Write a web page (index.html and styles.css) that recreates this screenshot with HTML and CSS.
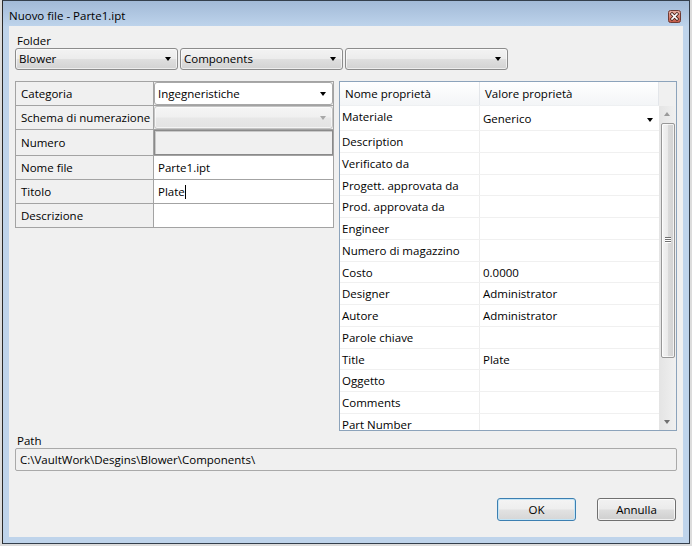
FILE: index.html
```html
<!DOCTYPE html>
<html>
<head>
<meta charset="utf-8">
<link rel="stylesheet" href="styles.css">
</head>
<body>
<div class="window">
  <div class="titlebar">
    <span class="title">Nuovo file - Parte1.ipt</span>
    <span class="close">
      <svg width="13" height="13" viewBox="0 0 13 13">
        <defs>
          <linearGradient id="cg" x1="0" y1="0" x2="0" y2="1">
            <stop offset="0" stop-color="#eab3a6"/>
            <stop offset="0.5" stop-color="#d98473"/>
            <stop offset="1" stop-color="#c25845"/>
          </linearGradient>
        </defs>
        <rect x="0.5" y="0.5" width="12" height="12" rx="2" fill="url(#cg)" stroke="#6e3a33"/>
        <path d="M4 4 L9 9 M9 4 L4 9" stroke="#4a231d" stroke-width="3.2" stroke-linecap="square"/>
        <path d="M4 4 L9 9 M9 4 L4 9" stroke="#ffffff" stroke-width="1.6" stroke-linecap="square"/>
      </svg>
    </span>
  </div>
  <div class="client">
    <div class="lbl folder-lbl">Folder</div>
    <div class="combos">
      <div class="combo">Blower<span class="arrow"></span></div>
      <div class="combo">Components<span class="arrow"></span></div>
      <div class="combo"><span class="arrow"></span></div>
    </div>
    <div class="main">
      <div class="fields">
        <div class="frow">
          <div class="fl">Categoria</div>
          <div class="fv nopad"><div class="combo white">Ingegneristiche<span class="arrow"></span></div></div>
        </div>
        <div class="frow">
          <div class="fl">Schema di numerazione</div>
          <div class="fv nopad"><div class="combo disabled"><span class="arrow light"></span></div></div>
        </div>
        <div class="frow tall">
          <div class="fl">Numero</div>
          <div class="fv nopad"><div class="textbox-dis"></div></div>
        </div>
        <div class="frow">
          <div class="fl">Nome file</div>
          <div class="fv">Parte1.ipt</div>
        </div>
        <div class="frow">
          <div class="fl">Titolo</div>
          <div class="fv">Plate<span class="caret"></span></div>
        </div>
        <div class="frow">
          <div class="fl">Descrizione</div>
          <div class="fv"></div>
        </div>
      </div>
      <div class="props">
        <div class="pmain">
          <div class="phead">
            <div class="pn">Nome proprietà</div>
            <div class="pv">Valore proprietà</div>
          </div>
          <div class="prow first">
            <div class="pn">Materiale</div>
            <div class="pv">Generico<span class="arrow"></span></div>
          </div>
          <div class="prow"><div class="pn">Description</div><div class="pv"></div></div>
          <div class="prow"><div class="pn">Verificato da</div><div class="pv"></div></div>
          <div class="prow"><div class="pn">Progett. approvata da</div><div class="pv"></div></div>
          <div class="prow"><div class="pn">Prod. approvata da</div><div class="pv"></div></div>
          <div class="prow"><div class="pn">Engineer</div><div class="pv"></div></div>
          <div class="prow"><div class="pn">Numero di magazzino</div><div class="pv"></div></div>
          <div class="prow"><div class="pn">Costo</div><div class="pv">0.0000</div></div>
          <div class="prow"><div class="pn">Designer</div><div class="pv">Administrator</div></div>
          <div class="prow"><div class="pn">Autore</div><div class="pv">Administrator</div></div>
          <div class="prow"><div class="pn">Parole chiave</div><div class="pv"></div></div>
          <div class="prow"><div class="pn">Title</div><div class="pv">Plate</div></div>
          <div class="prow"><div class="pn">Oggetto</div><div class="pv"></div></div>
          <div class="prow"><div class="pn">Comments</div><div class="pv"></div></div>
          <div class="prow"><div class="pn">Part Number</div><div class="pv"></div></div>
        </div>
        <div class="scrollbar">
          <div class="sb-corner"></div>
          <div class="sb-btn"><span class="sb-up"></span></div>
          <div class="sb-track">
            <div class="sb-thumb"><span class="grip"></span></div>
          </div>
          <div class="sb-btn"><span class="sb-down"></span></div>
        </div>
      </div>
    </div>
    <div class="lbl path-lbl">Path</div>
    <div class="pathbox">C:\VaultWork\Desgins\Blower\Components\</div>
    <div class="buttons">
      <div class="btn default">OK</div>
      <div class="btn">Annulla</div>
    </div>
  </div>
</div>
</body>
</html>
```

FILE: styles.css
```css
html, body {
  margin: 0;
  padding: 0;
}
body {
  background: #dcdcdc;
  font-family: "Open Sans", "DejaVu Sans", sans-serif;
  font-size: 11.5px;
  color: #000;
  width: 692px;
  height: 546px;
  overflow: hidden;
}
.window {
  margin-left: 2px;
  width: 688px;
  height: 544px;
  box-sizing: border-box;
  border: 1px solid #343f4c;
  border-left-color: #2a2a2a;
  background: #bfd4eb;
  display: flex;
  flex-direction: column;
}
.titlebar {
  height: 25px;
  flex: none;
  background: linear-gradient(#a2bad7, #bdd3eb);
  display: flex;
  align-items: flex-start;
}
.title {
  padding-top: 7px;
  padding-left: 6px;
  line-height: 15px;
}
.close {
  margin-left: auto;
  margin-right: 8px;
  margin-top: 9px;
  width: 13px;
  height: 13px;
  display: block;
}
.close svg {
  display: block;
}
.client {
  flex: 1;
  margin: 0 6px 6px;
  background: #f0f0f0;
  padding: 0 6px;
  display: flex;
  flex-direction: column;
}
.lbl {
  line-height: 15px;
  padding-left: 2px;
}
.folder-lbl {
  padding-top: 7px;
}
.combos {
  display: flex;
  gap: 2px;
}
.combo {
  position: relative;
  box-sizing: border-box;
  width: 163px;
  height: 22px;
  border: 1px solid #8c8c8c;
  border-radius: 3px;
  background: linear-gradient(#f3f3f3 0%, #ececec 48%, #dfdfdf 52%, #d2d2d2 100%);
  box-shadow: inset 0 0 0 1px rgba(255,255,255,0.6);
  padding-left: 3px;
  line-height: 20px;
}
.arrow {
  position: absolute;
  right: 6px;
  top: 50%;
  margin-top: -2px;
  width: 0;
  height: 0;
  border-left: 3.5px solid transparent;
  border-right: 3.5px solid transparent;
  border-top: 4px solid #000;
}
.arrow.light {
  border-top-color: #a8a8a8;
}
.main {
  margin-top: 11px;
  display: flex;
  gap: 5px;
  height: 350px;
  align-items: flex-start;
}
.fields {
  width: 319px;
  box-sizing: border-box;
  border: 1px solid #a3a3a3;
  border-bottom: none;
}
.frow {
  display: flex;
  height: 24px;
  box-sizing: border-box;
  border-bottom: 1px solid #a3a3a3;
}
.frow.tall {
  height: 26px;
}
.fl {
  width: 138px;
  box-sizing: border-box;
  border-right: 1px solid #a3a3a3;
  padding-left: 5px;
  white-space: nowrap;
  display: flex;
  align-items: center;
}
.fv {
  flex: 1;
  background: #fff;
  padding-left: 4px;
  display: flex;
  align-items: center;
}
.fv.nopad {
  padding-left: 0;
  background: #f0f0f0;
  align-items: stretch;
}
.combo.white {
  width: auto;
  flex: 1;
  height: auto;
  background: #fff;
  border-color: #a8a8a8;
  box-shadow: none;
  line-height: 21px;
  padding-left: 3px;
}
.combo.disabled {
  width: auto;
  flex: 1;
  height: auto;
  border-color: #c4c4c4;
  background: linear-gradient(#f5f5f5 0%, #f0f0f0 48%, #e8e8e8 52%, #e3e3e3 100%);
}
.textbox-dis {
  flex: 1;
  border: 1px solid #8a8a8a;
  box-shadow: inset 1px 1px 0 #c9c9c9;
  background: #f0f0f0;
}
.caret {
  display: inline-block;
  width: 1px;
  height: 14px;
  background: #000;
}
.props {
  flex: 1;
  height: 350px;
  box-sizing: border-box;
  border: 1px solid #8ca3bb;
  display: flex;
  background: #fff;
}
.pmain {
  flex: 1;
  overflow: hidden;
}
.phead {
  display: flex;
  height: 24px;
  background: linear-gradient(#ffffff, #f3f5f7);
  border-bottom: 1px solid #eef0f2;
  box-sizing: border-box;
  border-right: 1px solid #e3e6ea;
}
.phead .pn {
  padding-left: 5px;
  border-right-color: #e3e6ea;
  line-height: 23px;
}
.phead .pv {
  padding-left: 5px;
  line-height: 23px;
}
.pn {
  width: 140px;
  flex: none;
  box-sizing: border-box;
  border-right: 1px solid #ededed;
  padding-left: 2px;
  white-space: nowrap;
  overflow: hidden;
}
.pv {
  flex: 1;
  position: relative;
  padding-left: 3px;
}
.prow {
  display: flex;
  height: 21.75px;
  box-sizing: border-box;
  border-bottom: 1px solid #f0f0f0;
  line-height: 21px;
}
.prow.first {
  height: 25px;
}
.prow.first .pn {
  line-height: 15px;
  padding-top: 3px;
}
.prow.first .pv {
  line-height: 15px;
  padding-top: 5px;
}
.prow.first .arrow {
  right: 6px;
  top: 12px;
  margin-top: 0;
}
.scrollbar {
  width: 17px;
  flex: none;
  display: flex;
  flex-direction: column;
  background: linear-gradient(90deg, #e4e4e4, #f0f0f0);
}
.sb-corner {
  height: 24px;
  background: #f0f0f0;
}
.sb-btn {
  height: 17px;
  position: relative;
}
.sb-up, .sb-down {
  position: absolute;
  left: 5px;
  width: 0;
  height: 0;
  border-left: 3.5px solid transparent;
  border-right: 3.5px solid transparent;
}
.sb-up {
  top: 6px;
  border-bottom: 4px solid #9a9a9a;
}
.sb-down {
  top: 7px;
  border-top: 4px solid #707070;
}
.sb-track {
  flex: 1;
  position: relative;
}
.sb-thumb {
  margin-left: 2px;
  width: 14px;
  height: 235px;
  box-sizing: border-box;
  border: 1px solid #979797;
  border-radius: 2px;
  background: linear-gradient(90deg, #f4f4f4, #e9e9e9 50%, #dadada 52%, #d2d2d2);
  box-shadow: inset 0 0 0 1px rgba(255,255,255,0.7);
  position: relative;
}
.grip {
  position: absolute;
  left: 3px;
  top: 113px;
  width: 6px;
  height: 1px;
  background: #6f6f6f;
  box-shadow: 0 2px 0 #6f6f6f, 0 4px 0 #6f6f6f, 0 1px 0 #fff, 0 3px 0 #fff, 0 5px 0 #fff;
}
.path-lbl {
  padding-top: 2px;
}
.pathbox {
  height: 23px;
  box-sizing: border-box;
  border: 1px solid #a9a9a9;
  border-radius: 2px;
  background: #f0f0f0;
  padding-left: 4px;
  line-height: 21px;
}
.buttons {
  margin-top: 27px;
  display: flex;
  justify-content: flex-end;
  gap: 21px;
  padding-right: 1px;
}
.btn {
  width: 79px;
  height: 23px;
  box-sizing: border-box;
  border: 1px solid #707070;
  border-radius: 3px;
  background: linear-gradient(#f2f2f2 0%, #ebebeb 48%, #dddddd 52%, #cfcfcf 100%);
  box-shadow: inset 0 0 0 1px rgba(255,255,255,0.7);
  text-align: center;
  line-height: 21px;
}
.btn.default {
  border-color: #3c7fb1;
  box-shadow: inset 0 0 0 1px #c4e5f6;
  background: linear-gradient(#f4f4f4 0%, #eeeeee 48%, #e2e2e2 52%, #d6d6d6 100%);
}
```
